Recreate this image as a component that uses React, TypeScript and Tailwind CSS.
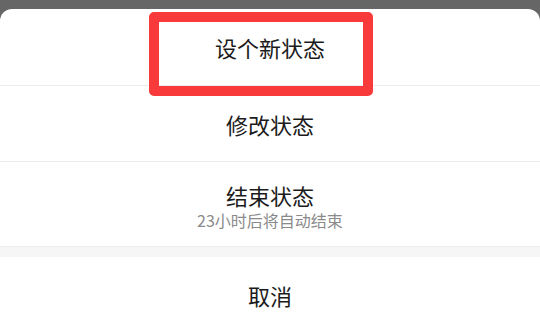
import React from 'react';

const font = { fontFamily: '"Noto Sans CJK SC", "Noto Sans", sans-serif' };

const SheetRow: React.FC<{ label: string; sub?: string; className?: string }> = ({ label, sub, className = '' }) => (
  <div className={`flex flex-col items-center justify-center border-b border-[#ececec] ${className}`}>
    <span className="text-[22px] leading-[28px] text-[#1b1b1b]">{label}</span>
    {sub && <span className="text-[16px] leading-[22px] text-[#8a8a8a]">{sub}</span>}
  </div>
);

export default function App() {
  return (
    <div className="w-[540px] h-[333px] bg-[#666666] pt-[9px] overflow-hidden flex flex-col" style={font}>
      <div className="relative flex-1 flex flex-col bg-white rounded-t-[12px]">
        <SheetRow label="设个新状态" className="h-[77px]" />
        <SheetRow label="修改状态" className="h-[76px]" />
        <SheetRow label="结束状态" sub="23小时后将自动结束" className="h-[85px] pt-[3px]" />
        <div className="h-[10px] bg-[#f6f6f6]" />
        <div className="flex-1 flex items-center justify-center">
          <span className="text-[22px] leading-[28px] text-[#1b1b1b]">取消</span>
        </div>

        {/* highlight annotation over the first option */}
        <div className="absolute top-[3px] left-[149px] w-[224px] h-[84px] border-[10px] border-[#f93a3a] rounded-[5px]" />
      </div>
    </div>
  );
}
